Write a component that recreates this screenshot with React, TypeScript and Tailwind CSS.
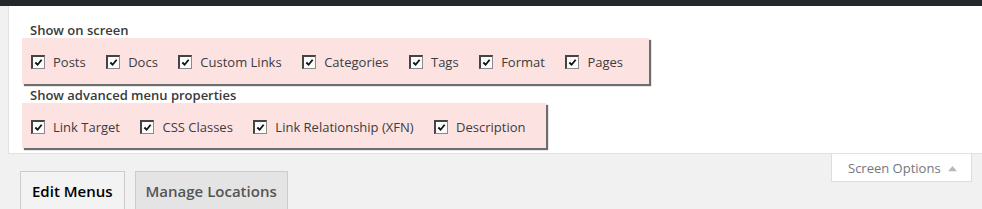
import React from "react";

function Cb() {
  return (
    <span className="relative inline-block w-[14px] h-[14px] shrink-0 bg-[#fbfbfb] border border-[#8a8a8a] border-t-[#444] border-l-[#444] border-t-2 border-l-2">
      <svg viewBox="0 0 10 10" className="absolute left-[1px] top-[1px] w-[9px] h-[9px]">
        <path d="M1.5 5 L4 7.5 L8.5 2" fill="none" stroke="#111" strokeWidth="2" />
      </svg>
    </span>
  );
}

function Item({ label }: { label: string }) {
  return (
    <label className="flex items-center mr-[20.5px] shrink-0 whitespace-nowrap">
      <Cb />
      <span className="ml-[8px] text-[13px] leading-[16px] text-[#3c3c3c]">{label}</span>
    </label>
  );
}

export default function App() {
  const font = { fontFamily: '"Open Sans", "Noto Sans", sans-serif' };
  return (
    <div className="w-[982px] h-[209px] bg-[#f1f1f1] overflow-hidden" style={font}>
      <div className="h-[6px] bg-[#23282d]" />
      <div className="ml-[8px] bg-white border-l border-b border-[#e2e2e2] pl-[13px] pt-[16px] pb-[5px]">
        <div className="h-[16px] leading-[16px] text-[13px] font-semibold text-[#3a3a3a] pl-[8px]">Show on screen</div>
        <div className="w-[627px] h-[46px] bg-[#fde2e2] shadow-[2px_2px_1px_rgba(60,60,60,0.75)] flex items-center pl-[9px] pt-[2px] overflow-hidden">
          {["Posts", "Docs", "Custom Links", "Categories", "Tags", "Format", "Pages"].map((l) => (
            <Item key={l} label={l} />
          ))}
        </div>
        <div className="mt-[3px] h-[16px] leading-[16px] text-[13px] font-semibold text-[#3a3a3a] pl-[8px]">Show advanced menu properties</div>
        <div className="w-[524px] h-[45px] bg-[#fde2e2] shadow-[2px_2px_1px_rgba(60,60,60,0.75)] flex items-center pl-[9px] pt-[2px] overflow-hidden">
          {["Link Target", "CSS Classes", "Link Relationship (XFN)", "Description"].map((l) => (
            <Item key={l} label={l} />
          ))}
        </div>
      </div>
      <div className="flex justify-between items-start">
        <div className="flex pt-[17px] pl-[20px] gap-[10px]">
          <div className="h-[40px] px-[11px] pt-[7px] border border-[#ccc] border-b-0 bg-[#f3f3f3] text-[15px] leading-[24px] font-semibold text-black whitespace-nowrap">Edit Menus</div>
          <div className="h-[40px] px-[10px] pt-[7px] border border-[#ccc] border-b-0 bg-[#e4e4e4] text-[15px] leading-[24px] font-semibold text-[#555] whitespace-nowrap">Manage Locations</div>
        </div>
        <div className="mr-[10px] w-[141px] h-[28px] bg-white border border-t-0 border-[#ddd] flex items-center pl-[16px] pt-[2px] text-[13px] text-[#72777c] whitespace-nowrap">
          Screen Options
          <svg viewBox="0 0 10 8" className="ml-[7px] w-[9px] h-[7px]">
            <path d="M0 7 L5 1 L10 7 Z" fill="#b4b9be" />
          </svg>
        </div>
      </div>
    </div>
  );
}
